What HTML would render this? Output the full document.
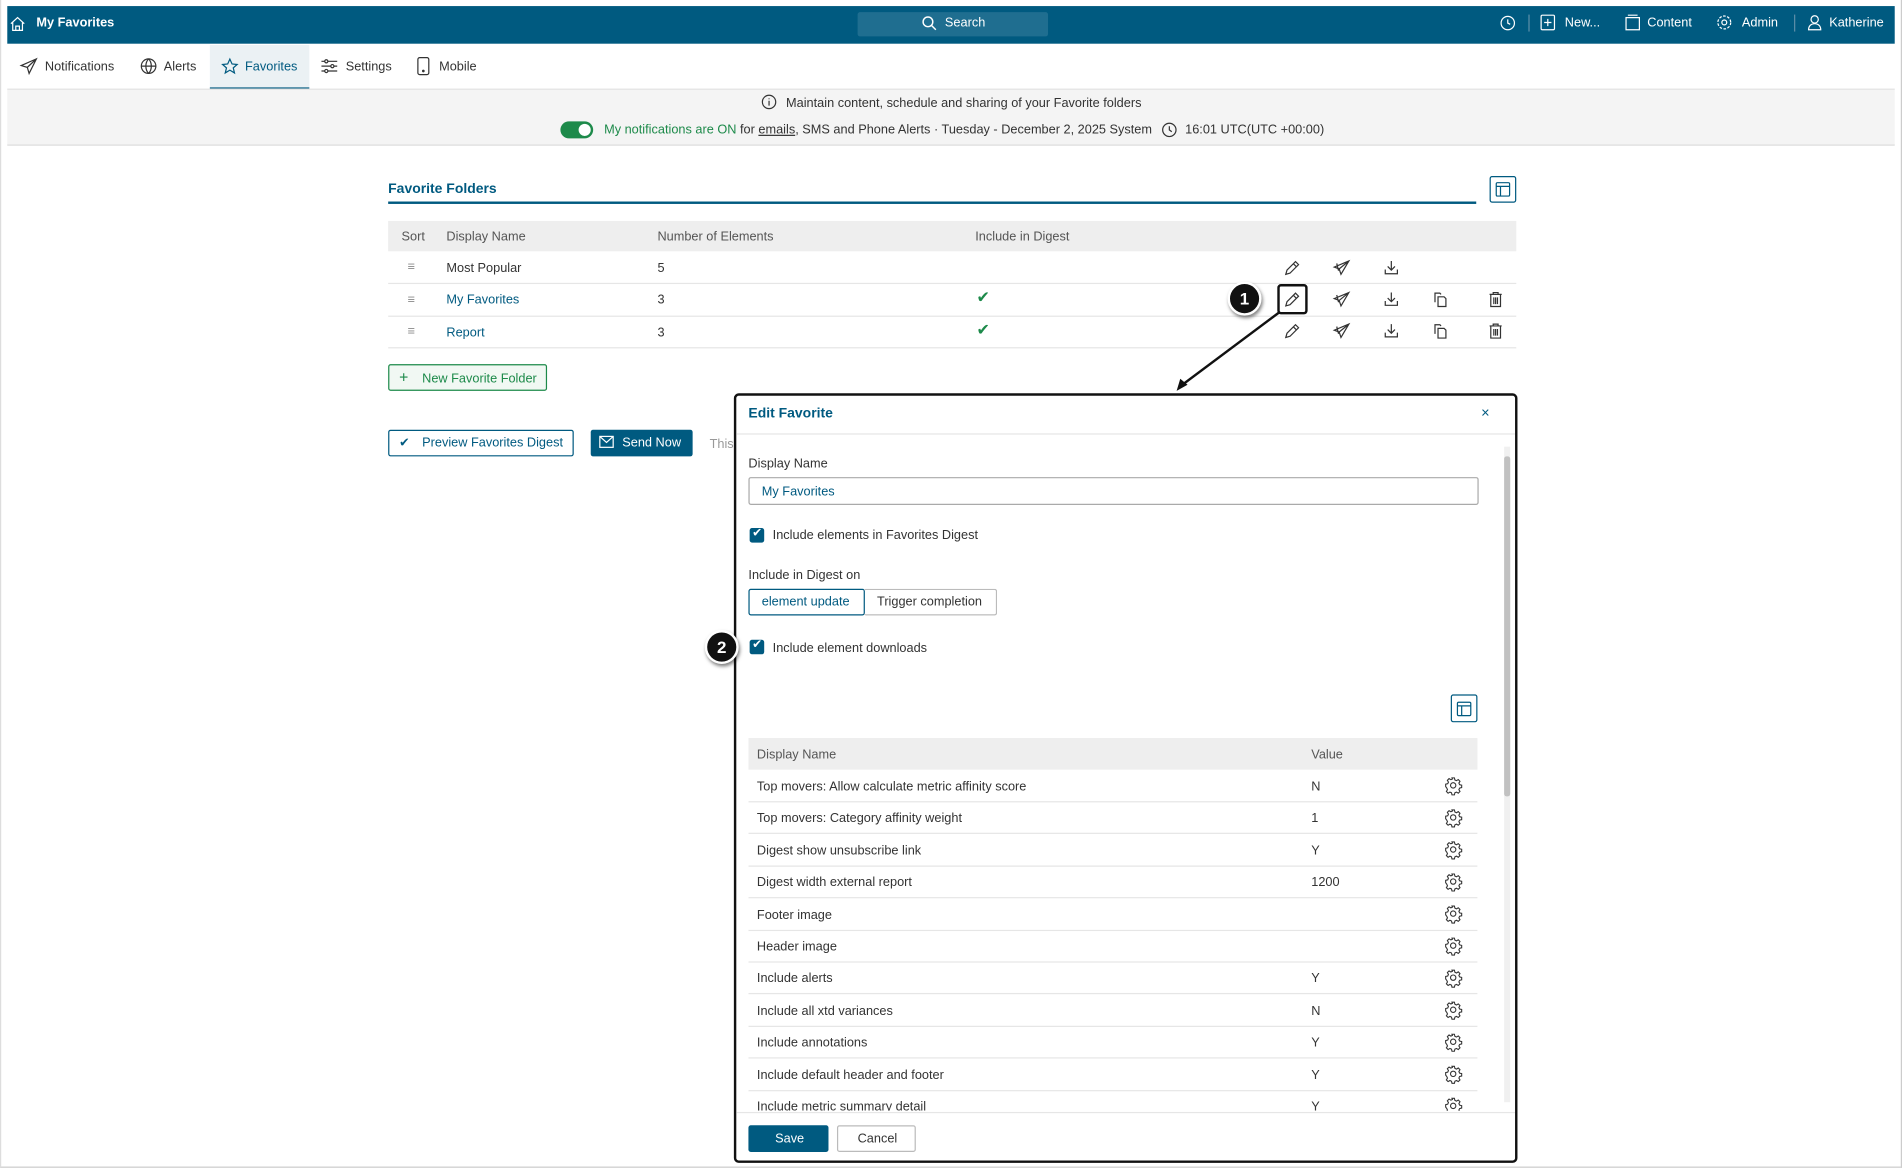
<!DOCTYPE html>
<html><head><meta charset="utf-8"><style>
html,body{margin:0;padding:0;width:1902px;height:1169px;overflow:hidden;background:#fff}
#s{position:absolute;left:0;top:0;width:1568px;height:963px;transform:scale(1.21301,1.21391);transform-origin:0 0;font-family:"Liberation Sans",sans-serif;font-size:10.5px;color:#333}
.a{position:absolute}
.t{position:absolute;white-space:nowrap;line-height:12px}
svg{position:absolute;overflow:visible}
.hdr{left:6px;top:5px;width:1556px;height:31px;background:#005a80}
.w{color:#fff}
.b{color:#005a80}
.row{position:absolute;left:320px;width:930px;height:26px;border-bottom:1px solid #e6e6e6}
.mrow{position:absolute;left:617px;width:601px;height:26px;border-bottom:1px solid #e6e6e6}
.btn{position:absolute;border-radius:2px;box-sizing:border-box}
.cb{position:absolute;width:12px;height:12px;background:#005a80;border-radius:2px}
.callout{position:absolute;width:24px;height:24px;border-radius:50%;background:#111;border:2px solid #fff;box-shadow:1px 2px 3px rgba(0,0,0,.5);color:#fff;font-weight:bold;font-size:14px;text-align:center;line-height:24px}
</style></head><body><div id="s">
<div class="a" style="left:0;top:0;width:1566px;height:961px;border-right:1px solid #ccc;border-bottom:1px solid #ccc;border-left:1px solid #ddd"></div>
<div class="a hdr"></div>
<svg style="left:8px;top:13px" width="13" height="13" viewBox="0 0 13 13" fill="none" stroke="#fff" stroke-width="1"><path d="M1 6.5L6.5 1.5 12 6.5M2.5 5.5V12h8V5.5M5 12V8.5h3V12"/></svg>
<div class="t w" style="left:30px;top:13px;font-weight:bold;font-size:10.5px">My Favorites</div>
<div class="a" style="left:707px;top:10px;width:157px;height:20px;background:#1f6e90;border-radius:2px"></div>
<svg style="left:760px;top:13px" width="12" height="12" fill="none" stroke="#fff" stroke-width="1.2"><circle cx="5" cy="5" r="4"/><path d="M8 8l3.5 3.5"/></svg>
<div class="t w" style="left:779px;top:13px">Search</div>
<svg style="left:1237px;top:13px" width="12" height="12" fill="none" stroke="#fff"><circle cx="6" cy="6" r="5.5"/><path d="M6 3v3l2 1"/></svg>
<div class="a" style="left:1260px;top:12px;width:1px;height:14px;background:#5d8ea8"></div>
<svg style="left:1270px;top:12px" width="12" height="13" fill="none" stroke="#fff"><rect x="0.5" y="0.5" width="11" height="12" rx="1"/><path d="M6 3.5v6M3 6.5h6"/></svg>
<div class="t w" style="left:1290px;top:13px">New...</div>
<svg style="left:1340px;top:12px" width="12" height="13" fill="none" stroke="#fff"><path d="M.5 2.5h11v10H.5zM2 .5h8"/></svg>
<div class="t w" style="left:1358px;top:13px">Content</div>
<svg style="left:1415px;top:12px" width="13" height="13" fill="none" stroke="#fff"><circle cx="6.5" cy="6.5" r="2"/><circle cx="6.5" cy="6.5" r="5.3" stroke-dasharray="2.2 1.2"/></svg>
<div class="t w" style="left:1436px;top:13px">Admin</div>
<div class="a" style="left:1479px;top:12px;width:1px;height:14px;background:#5d8ea8"></div>
<svg style="left:1490px;top:12px" width="12" height="13" fill="none" stroke="#fff"><circle cx="6" cy="4" r="3"/><path d="M1 12.5c0-3 2-5 5-5s5 2 5 5z"/></svg>
<div class="t w" style="left:1508px;top:13px">Katherine</div>

<div class="a" style="left:173px;top:37px;width:82px;height:35px;background:#ebf1f4;border-bottom:2px solid #005a80"></div>
<svg style="left:17px;top:48px" width="14" height="13" fill="none" stroke="#333"><path d="M13 .5L.5 6l5 1.5L7 12.5zM5.5 7.5L13 .5"/></svg>
<div class="t" style="left:37px;top:49px">Notifications</div>
<svg style="left:116px;top:48px" width="13" height="13" fill="none" stroke="#333"><circle cx="6.5" cy="6.5" r="6"/><path d="M.5 6.5h12M6.5.5c-3 3-3 9 0 12M6.5.5c3 3 3 9 0 12"/></svg>
<div class="t" style="left:135px;top:49px">Alerts</div>
<svg style="left:183px;top:48px" width="13" height="13" fill="none" stroke="#005a80"><path d="M6.5 .7l1.8 4 4.2.4-3.2 2.8 1 4.2-3.8-2.3-3.8 2.3 1-4.2L.5 5.1l4.2-.4z"/></svg>
<div class="t b" style="left:202px;top:49px">Favorites</div>
<svg style="left:265px;top:48px" width="13" height="13" fill="none" stroke="#333"><path d="M0 2.5h13M0 6.5h13M0 10.5h13"/><circle cx="4" cy="2.5" r="1.3" fill="#fff"/><circle cx="9" cy="6.5" r="1.3" fill="#fff"/><circle cx="4" cy="10.5" r="1.3" fill="#fff"/></svg>
<div class="t" style="left:285px;top:49px">Settings</div>
<svg style="left:344px;top:47px" width="10" height="15" fill="none" stroke="#333"><rect x=".5" y=".5" width="9" height="14" rx="1.5"/><circle cx="5" cy="11.5" r=".6" fill="#333"/></svg>
<div class="t" style="left:362px;top:49px">Mobile</div>

<div class="a" style="left:6px;top:73px;width:1556px;height:45px;background:#f4f4f4;border-top:1px solid #e3e3e3;border-bottom:1px solid #ddd"></div>
<svg style="left:628px;top:78px" width="12" height="12" fill="none" stroke="#333"><circle cx="6" cy="6" r="5.5"/><path d="M6 5v4M6 3v.8"/></svg>
<div class="t" style="left:648px;top:79px">Maintain content, schedule and sharing of your Favorite folders</div>
<div class="a" style="left:462px;top:100px;width:27px;height:14px;border-radius:7px;background:#1d8a4a"></div>
<div class="a" style="left:477px;top:102px;width:10px;height:10px;border-radius:50%;background:#fff"></div>
<div class="t" style="left:498px;top:101px"><span style="color:#1d8a4a">My notifications are ON</span> for <u>emails</u>, SMS and Phone Alerts · Tuesday - December 2, 2025 System</div>
<svg style="left:958px;top:101px" width="12" height="12" fill="none" stroke="#333"><circle cx="6" cy="6" r="5.5"/><path d="M6 3v3l2 1.5"/></svg>
<div class="t" style="left:977px;top:101px">16:01 UTC(UTC +00:00)</div>

<div class="t b" style="left:320px;top:150px;font-weight:bold;font-size:11.5px">Favorite Folders</div>
<div class="a" style="left:320px;top:166px;width:897px;height:1.5px;background:#005a80"></div>
<div class="btn" style="left:1228px;top:145px;width:22px;height:22px;border:1px solid #005a80"></div>
<svg style="left:1233px;top:150px" width="12" height="12" fill="none" stroke="#005a80"><rect x=".5" y=".5" width="11" height="11" rx="1"/><path d="M.5 3.5h11M4 3.5v8"/></svg>

<div class="a" style="left:320px;top:182px;width:930px;height:25px;background:#eeeeee"></div>
<div class="t" style="left:331px;top:189px;color:#555">Sort</div>
<div class="t" style="left:368px;top:189px;color:#555">Display Name</div>
<div class="t" style="left:542px;top:189px;color:#555">Number of Elements</div>
<div class="t" style="left:804px;top:189px;color:#555">Include in Digest</div>

<div class="row" style="top:207px"></div>
<div class="row" style="top:234px"></div>
<div class="row" style="top:260px"></div>
<div class="t" style="left:336px;top:214px;color:#888">≡</div><div class="t" style="left:368px;top:215px">Most Popular</div><div class="t" style="left:542px;top:215px">5</div>
<div class="t" style="left:336px;top:241px;color:#888">≡</div><div class="t b" style="left:368px;top:241px">My Favorites</div><div class="t" style="left:542px;top:241px">3</div><div class="t" style="left:805px;top:239px;color:#1d8a4a;font-size:13px">✔</div>
<div class="t" style="left:336px;top:267px;color:#888">≡</div><div class="t b" style="left:368px;top:268px">Report</div><div class="t" style="left:542px;top:268px">3</div><div class="t" style="left:805px;top:266px;color:#1d8a4a;font-size:13px">✔</div>

<!-- row icons -->
<svg style="left:0;top:0" width="1" height="1" fill="none" stroke="#333" stroke-width="1">
<g id="r1" transform="translate(0,214)">
<path d="M1060 12l1-3.5 7-7 2.5 2.5-7 7zM1066 3l2.5 2.5"/>
<path d="M1112 1l-12 5 4 1.5 1.5 4.5zM1104 7.5L1112 1M1102 3l1.5 6"/>
<path d="M1147 1v7M1144 5.5l3 3 3-3M1142 8v3.5h10V8"/>
</g>
<g transform="translate(0,240)">
<path d="M1060 12l1-3.5 7-7 2.5 2.5-7 7zM1066 3l2.5 2.5"/>
<path d="M1112 1l-12 5 4 1.5 1.5 4.5zM1104 7.5L1112 1M1102 3l1.5 6"/>
<path d="M1147 1v7M1144 5.5l3 3 3-3M1142 8v3.5h10V8"/>
<path d="M1183 9V1.5h4l1 1M1185.5 4.5h5l1.5 1.5v6.5h-6.5z"/>
<path d="M1228 2.5h10M1231 2.5V1h4v1.5M1229 2.5v10h8v-10M1231.5 5v5.5M1233 5v5.5M1234.5 5v5.5"/>
</g>
<g transform="translate(0,266)">
<path d="M1060 12l1-3.5 7-7 2.5 2.5-7 7zM1066 3l2.5 2.5"/>
<path d="M1112 1l-12 5 4 1.5 1.5 4.5zM1104 7.5L1112 1M1102 3l1.5 6"/>
<path d="M1147 1v7M1144 5.5l3 3 3-3M1142 8v3.5h10V8"/>
<path d="M1183 9V1.5h4l1 1M1185.5 4.5h5l1.5 1.5v6.5h-6.5z"/>
<path d="M1228 2.5h10M1231 2.5V1h4v1.5M1229 2.5v10h8v-10M1231.5 5v5.5M1233 5v5.5M1234.5 5v5.5"/>
</g>
</svg>
<div class="a" style="left:1053px;top:234px;width:21px;height:21px;border:2px solid #111;border-radius:3px"></div>
<div class="callout" style="left:1012px;top:232px">1</div>
<svg style="left:0;top:0" width="1" height="1"><path d="M1055 257L976 316" stroke="#111" stroke-width="2"/><path d="M970 322l3-10 6 5z" fill="#111"/></svg>

<div class="btn" style="left:320px;top:300px;width:131px;height:22px;border:1px solid #1d8a4a;background:#f1f8f3"></div>
<div class="t" style="left:329px;top:305px;color:#1d8a4a;font-size:13px">+</div>
<div class="t" style="left:348px;top:306px;color:#1d8a4a">New Favorite Folder</div>

<div class="btn" style="left:320px;top:354px;width:153px;height:22px;border:1px solid #005a80"></div>
<div class="t b" style="left:329px;top:359px">✔</div>
<div class="t b" style="left:348px;top:359px">Preview Favorites Digest</div>
<div class="btn" style="left:487px;top:354px;width:84px;height:22px;background:#005a80"></div>
<svg style="left:494px;top:359px" width="12" height="10" fill="none" stroke="#fff"><rect x=".5" y=".5" width="11" height="9"/><path d="M.5 .5l5.5 5 5.5-5"/></svg>
<div class="t w" style="left:513px;top:359px">Send Now</div>
<div class="t" style="left:585px;top:360px;color:#999">This</div>

<!-- modal -->
<div class="a" style="left:605px;top:324px;width:642px;height:630px;border:2px solid #111;border-radius:4px;background:#fff;overflow:hidden">
 <div class="a" style="left:0;top:31px;width:642px;height:1px;background:#e6e6e6"></div>
 <div class="a" style="left:0;top:590px;width:642px;height:1px;background:#e6e6e6"></div>
</div>
<div class="t b" style="left:617px;top:335px;font-weight:bold;font-size:11.5px">Edit Favorite</div>
<div class="t b" style="left:1221px;top:334px;font-size:12px">×</div>
<div class="t" style="left:617px;top:376px">Display Name</div>
<div class="a" style="left:617px;top:393px;width:600px;height:21px;border:1px solid #aaa;border-radius:2px"></div>
<div class="t b" style="left:628px;top:399px">My Favorites</div>
<div class="cb" style="left:618px;top:435px"></div><div class="t w" style="left:620px;top:434px;font-size:10px">✔</div>
<div class="t" style="left:637px;top:435px">Include elements in Favorites Digest</div>
<div class="t" style="left:617px;top:468px">Include in Digest on</div>
<div class="btn" style="left:617px;top:485px;width:96px;height:22px;border:1px solid #005a80"></div>
<div class="btn" style="left:712px;top:485px;width:110px;height:22px;border:1px solid #bbb;border-left:none"></div>
<div class="t b" style="left:628px;top:490px">element update</div>
<div class="t" style="left:723px;top:490px">Trigger completion</div>
<div class="callout" style="left:581px;top:519px">2</div>
<div class="cb" style="left:618px;top:527px"></div><div class="t w" style="left:620px;top:526px;font-size:10px">✔</div>
<div class="t" style="left:637px;top:528px">Include element downloads</div>
<div class="btn" style="left:1196px;top:572px;width:22px;height:23px;border:1px solid #005a80"></div>
<svg style="left:1201px;top:578px" width="12" height="12" fill="none" stroke="#005a80"><rect x=".5" y=".5" width="11" height="11" rx="1"/><path d="M.5 3.5h11M4 3.5v8"/></svg>
<div class="a" style="left:1240px;top:368px;width:5px;height:540px;background:#f0f0f0"></div>
<div class="a" style="left:1240px;top:376px;width:5px;height:280px;background:#c1c1c1;border-radius:2px"></div>

<div class="a" style="left:617px;top:608px;width:601px;height:26px;background:#eee"></div>
<div class="t" style="left:624px;top:616px;color:#555">Display Name</div>
<div class="t" style="left:1081px;top:616px;color:#555">Value</div>
<div class="a" style="left:617px;top:634px;width:601px;height:281px;overflow:hidden">
<div style="position:relative">
<div class="mrow" style="left:0;top:0"></div><div class="t" style="left:7px;top:8px">Top movers: Allow calculate metric affinity score</div><div class="t" style="left:464px;top:8px">N</div>
<div class="mrow" style="left:0;top:26.4px"></div><div class="t" style="left:7px;top:34px">Top movers: Category affinity weight</div><div class="t" style="left:464px;top:34px">1</div>
<div class="mrow" style="left:0;top:52.8px"></div><div class="t" style="left:7px;top:61px">Digest show unsubscribe link</div><div class="t" style="left:464px;top:61px">Y</div>
<div class="mrow" style="left:0;top:79.2px"></div><div class="t" style="left:7px;top:87px">Digest width external report</div><div class="t" style="left:464px;top:87px">1200</div>
<div class="mrow" style="left:0;top:105.6px"></div><div class="t" style="left:7px;top:114px">Footer image</div>
<div class="mrow" style="left:0;top:132px"></div><div class="t" style="left:7px;top:140px">Header image</div>
<div class="mrow" style="left:0;top:158.4px"></div><div class="t" style="left:7px;top:166px">Include alerts</div><div class="t" style="left:464px;top:166px">Y</div>
<div class="mrow" style="left:0;top:184.8px"></div><div class="t" style="left:7px;top:193px">Include all xtd variances</div><div class="t" style="left:464px;top:193px">N</div>
<div class="mrow" style="left:0;top:211.2px"></div><div class="t" style="left:7px;top:219px">Include annotations</div><div class="t" style="left:464px;top:219px">Y</div>
<div class="mrow" style="left:0;top:237.6px"></div><div class="t" style="left:7px;top:246px">Include default header and footer</div><div class="t" style="left:464px;top:246px">Y</div>
<div class="mrow" style="left:0;top:264px"></div><div class="t" style="left:7px;top:272px">Include metric summary detail</div><div class="t" style="left:464px;top:272px">Y</div>
<svg style="left:574px;top:6px" width="14" height="290" fill="none" stroke="#333" stroke-width="0.9">
<defs><g id="g"><circle cx="7" cy="7" r="2.2"/><path d="M6 .8h2l.4 1.7 1.3.6 1.5-.9 1.4 1.4-.9 1.5.6 1.3 1.7.4v2l-1.7.4-.6 1.3.9 1.5-1.4 1.4-1.5-.9-1.3.6-.4 1.7H6l-.4-1.7-1.3-.6-1.5.9-1.4-1.4.9-1.5-.6-1.3L.8 8V6l1.7-.4.6-1.3-.9-1.5 1.4-1.4 1.5.9 1.3-.6z"/></g></defs>
<use href="#g" y="0"/><use href="#g" y="26.4"/><use href="#g" y="52.8"/><use href="#g" y="79.2"/><use href="#g" y="105.6"/><use href="#g" y="132"/><use href="#g" y="158.4"/><use href="#g" y="184.8"/><use href="#g" y="211.2"/><use href="#g" y="237.6"/><use href="#g" y="264"/>
</svg>
</div></div>
<div class="btn" style="left:617px;top:927px;width:66px;height:22px;background:#005a80"></div>
<div class="t w" style="left:639px;top:932px">Save</div>
<div class="btn" style="left:690px;top:927px;width:65px;height:22px;border:1px solid #bbb"></div>
<div class="t" style="left:707px;top:932px">Cancel</div>
</div></body></html>
